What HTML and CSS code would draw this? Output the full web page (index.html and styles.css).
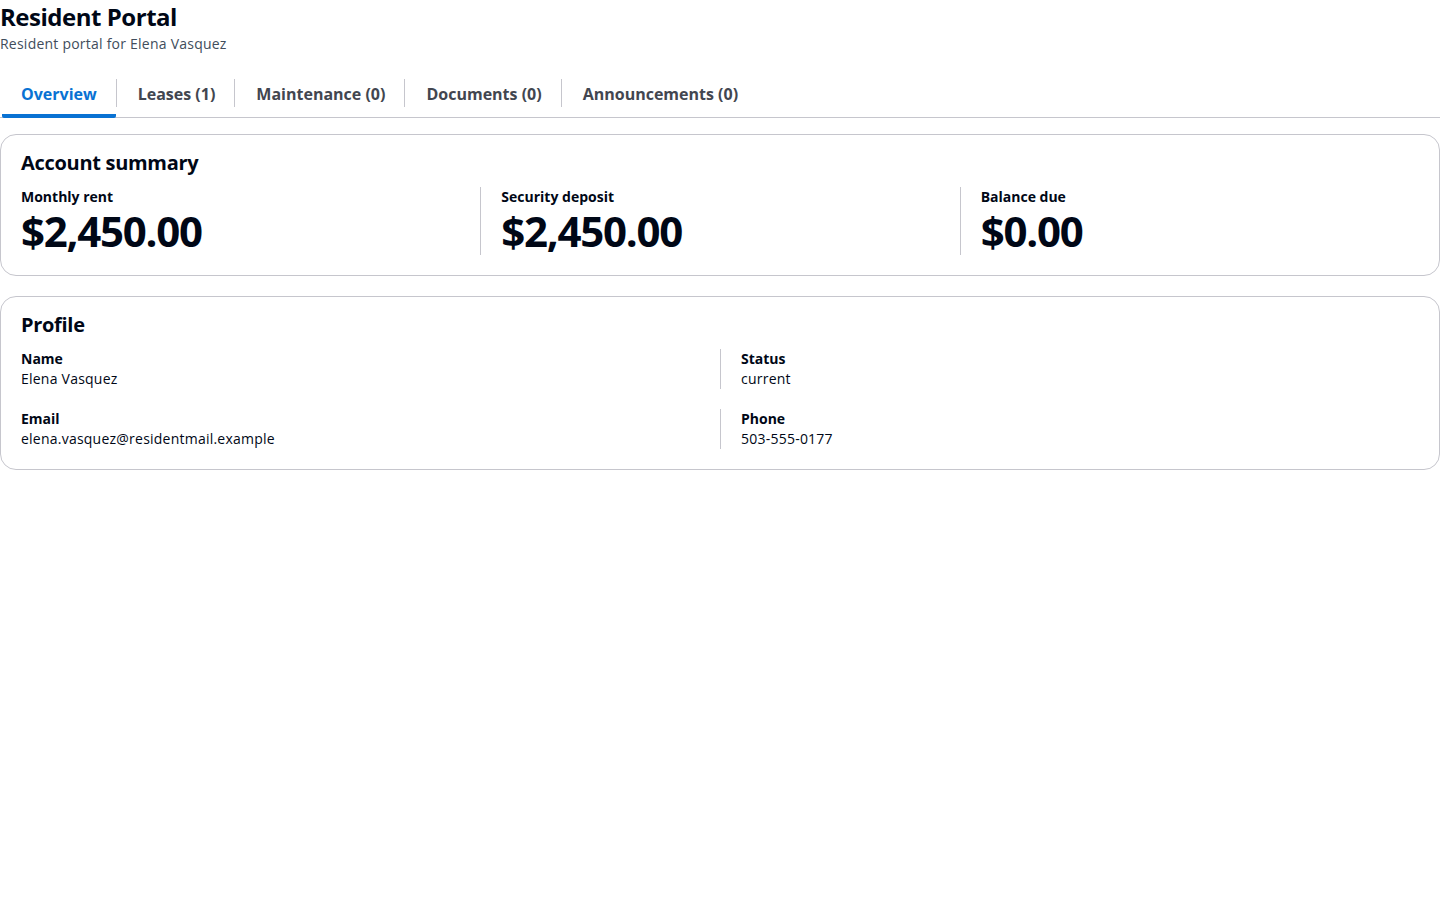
FILE: index.html
```html
<!DOCTYPE html>
<html lang="en">
  <head>
    <meta charset="UTF-8" />
    <meta name="viewport" content="width=device-width, initial-scale=1.0" />
    <title>Resident Portal</title>

    <link rel="stylesheet" href="styles.css">
  </head>

  <body>
    <div id="root">
      <div class="page-header">
        <h1>Resident Portal</h1>
        <p class="subtitle">Resident portal for Elena Vasquez</p>
      </div>

      <div class="tabs">
        <div class="tab active"><span>Overview</span></div>
        <div class="tab"><span>Leases (1)</span></div>
        <div class="tab"><span>Maintenance (0)</span></div>
        <div class="tab"><span>Documents (0)</span></div>
        <div class="tab"><span>Announcements (0)</span></div>
      </div>

      <div class="card">
        <h2>Account summary</h2>
        <div class="columns three">
          <div class="column">
            <div class="label">Monthly rent</div>
            <div class="big-value">$2,450.00</div>
          </div>
          <div class="column">
            <div class="label">Security deposit</div>
            <div class="big-value">$2,450.00</div>
          </div>
          <div class="column">
            <div class="label">Balance due</div>
            <div class="big-value">$0.00</div>
          </div>
        </div>
      </div>

      <div class="card">
        <h2>Profile</h2>
        <div class="columns two">
          <div class="column">
            <div class="field">
              <div class="label">Name</div>
              <div class="value">Elena Vasquez</div>
            </div>
            <div class="field">
              <div class="label">Email</div>
              <div class="value">elena.vasquez@residentmail.example</div>
            </div>
          </div>
          <div class="column">
            <div class="field">
              <div class="label">Status</div>
              <div class="value">current</div>
            </div>
            <div class="field">
              <div class="label">Phone</div>
              <div class="value">503-555-0177</div>
            </div>
          </div>
        </div>
      </div>
    </div>
  </body>
</html>
```

FILE: styles.css
```css
* {
  margin: 0;
  padding: 0;
  box-sizing: border-box;
}

body {
  font-family: "Open Sans", "Noto Sans", sans-serif;
  font-size: 14px;
  line-height: 20px;
  color: #000716;
  background-color: white;
}

#root {
  display: flex;
  flex-direction: column;
  gap: 20px;
}

.page-header h1 {
  font-size: 24px;
  line-height: 34px;
  font-weight: 700;
  letter-spacing: -0.02em;
}

.page-header .subtitle {
  color: #414d5c;
  font-size: 14px;
  line-height: 20px;
  letter-spacing: 0.23px;
}

.tabs {
  display: flex;
  align-items: stretch;
  border-bottom: 1px solid #c6c6cd;
  padding-left: 2px;
  margin-top: -1px;
  margin-bottom: -4px;
}

.tab {
  display: flex;
  align-items: center;
  height: 44px;
  padding: 0 19px 0 21px;
  font-size: 16px;
  font-weight: 700;
  color: #424650;
}

.tab + .tab {
  border-left: 1px solid #c6c6cd;
  margin: 6px 0 10px;
  height: 28px;
}

.tab + .tab span {
  position: relative;
  top: 1px;
}

.tab.active {
  color: #0972d3;
  border-bottom: 4px solid #0972d3;
  border-radius: 2px;
  margin-bottom: -1px;
  height: 45px;
  padding-left: 19px;
}

.card {
  border: 1px solid #c6c6cd;
  border-radius: 16px;
  padding: 16px 20px 20px;
}

.card h2 {
  font-size: 20px;
  line-height: 24px;
  font-weight: 700;
  letter-spacing: -0.015em;
  margin-bottom: 12px;
}

.columns {
  display: grid;
  margin: 0 -20px;
}

.columns.three {
  grid-template-columns: 1fr 1fr 1fr;
}

.columns.two {
  grid-template-columns: 1fr 1fr;
}

.column {
  padding: 0 20px;
}

.columns.three .column + .column {
  border-left: 1px solid #c6c6cd;
}

.columns.two .column {
  display: flex;
  flex-direction: column;
  gap: 20px;
}

.columns.two .column + .column .field {
  border-left: 1px solid #c6c6cd;
  margin-left: -20px;
  padding-left: 20px;
}

.label {
  font-weight: 700;
  font-size: 14px;
  line-height: 20px;
}

.value {
  font-size: 14px;
  line-height: 20px;
  letter-spacing: 0.23px;
}

.big-value {
  font-size: 42px;
  line-height: 48px;
  font-weight: 700;
  letter-spacing: -0.03em;
}
```
